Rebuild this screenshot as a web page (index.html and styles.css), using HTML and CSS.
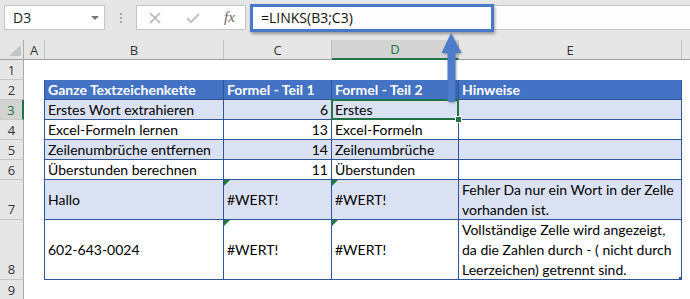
FILE: index.html
```html
<!DOCTYPE html>
<html lang="de">
<head>
  <meta charset="UTF-8">
  <title>LINKS</title>
  <link rel="stylesheet" href="styles.css">
</head>
<body>
  <div id="app">
    <div id="toolbar">
      <div id="namebox"><span>D3</span><span class="caret"></span></div>
      <div id="grip"><i></i><i></i><i></i></div>
      <div id="buttons">
        <svg width="12" height="12" viewBox="0 0 12 12"><path d="M1 1 L11 11 M11 1 L1 11" stroke="#b4b4b4" stroke-width="1.6" fill="none"/></svg>
        <svg width="14" height="12" viewBox="0 0 14 12"><path d="M1 6 L5 10 L13 2" stroke="#c2c2c2" stroke-width="2" fill="none"/></svg>
        <span class="fx">fx</span>
      </div>
      <div id="formula">=LINKS(B3;C3)</div>
    </div>

    <div id="sheet">
      <div class="corner"><span></span></div>
      <div class="ch">A</div>
      <div class="ch">B</div>
      <div class="ch">C</div>
      <div class="ch on">D</div>
      <div class="ch">E</div>
      <div class="ch rest"></div>

      <div class="rh">1</div>
      <div class="c"></div><div class="c"></div><div class="c"></div><div class="c"></div><div class="c"></div><div class="c"></div>

      <div class="rh">2</div>
      <div class="c edge"></div>
      <div class="t th">Ganze Textzeichenkette</div>
      <div class="t th">Formel - Teil 1</div>
      <div class="t th">Formel - Teil 2</div>
      <div class="t th">Hinweise</div>
      <div class="c"></div>

      <div class="rh on">3</div>
      <div class="c edge"></div>
      <div class="t band">Erstes Wort extrahieren</div>
      <div class="t band num">6</div>
      <div class="t band sel">Erstes</div>
      <div class="t band"></div>
      <div class="c"></div>

      <div class="rh">4</div>
      <div class="c edge"></div>
      <div class="t">Excel-Formeln lernen</div>
      <div class="t num">13</div>
      <div class="t">Excel-Formeln</div>
      <div class="t"></div>
      <div class="c"></div>

      <div class="rh">5</div>
      <div class="c edge"></div>
      <div class="t band">Zeilenumbrüche entfernen</div>
      <div class="t band num">14</div>
      <div class="t band">Zeilenumbrüche</div>
      <div class="t band"></div>
      <div class="c"></div>

      <div class="rh">6</div>
      <div class="c edge"></div>
      <div class="t">Überstunden berechnen</div>
      <div class="t num">11</div>
      <div class="t">Überstunden</div>
      <div class="t"></div>
      <div class="c"></div>

      <div class="rh low">7</div>
      <div class="c edge"></div>
      <div class="t band">Hallo</div>
      <div class="t band err">#WERT!</div>
      <div class="t band err">#WERT!</div>
      <div class="t band wrap">Fehler Da nur ein Wort in der Zelle<br>vorhanden ist.</div>
      <div class="c"></div>

      <div class="rh low">8</div>
      <div class="c edge"></div>
      <div class="t">602-643-0024</div>
      <div class="t err">#WERT!</div>
      <div class="t err">#WERT!</div>
      <div class="t wrap last">Vollständige Zelle wird angezeigt,<br>da die Zahlen durch - ( nicht durch<br>Leerzeichen) getrennt sind.</div>
      <div class="c"></div>

      <div class="rh">9</div>
      <div class="c"></div><div class="c"></div><div class="c"></div><div class="c"></div><div class="c"></div><div class="c"></div>
    </div>

    <!-- callout: box round the formula and arrow down to D3 -->
    <div id="callout"></div>
    <svg id="arrow" width="30" height="76" viewBox="0 0 30 76">
      <path d="M13 3 L23.5 23 L17.5 23 L17.5 70 Q17.5 72 15.5 72 L11.5 72 Q9.5 72 9.5 70 L9.5 23 L3.5 23 Z" fill="#4f7cca"/>
    </svg>
  </div>
</body>
</html>
```

FILE: styles.css
```css
body {
    margin: 0;
    background: #fff;
    font-family: 'Lato', 'Liberation Sans', sans-serif;
    color: #000;
}
#app {
    position: relative;
    width: 690px;
    height: 299px;
    overflow: hidden;
}

/* toolbar */
#toolbar {
    display: flex;
    align-items: flex-start;
    height: 40px;
    padding-top: 5px;
    box-sizing: border-box;
    background: #e6e6e6;
}
#namebox {
    display: flex;
    align-items: center;
    justify-content: space-between;
    box-sizing: border-box;
    width: 101px;
    height: 25px;
    margin-left: 4px;
    padding: 0 5px 0 8px;
    background: #fff;
    border: 1px solid #c6c6c6;
    font-family: 'Open Sans', sans-serif;
    font-size: 14px;
    color: #222;
}
.caret {
    width: 0;
    height: 0;
    border-left: 4px solid transparent;
    border-right: 4px solid transparent;
    border-top: 4px solid #777;
}
#grip {
    display: flex;
    flex-direction: column;
    align-items: center;
    gap: 2px;
    width: 31px;
    padding-top: 8px;
}
#grip i {
    width: 2px;
    height: 2px;
    background: #a8a8a8;
}
#buttons {
    display: flex;
    align-items: center;
    box-sizing: border-box;
    width: 110px;
    height: 25px;
    padding-left: 12px;
    background: #fff;
    border: 1px solid #c6c6c6;
}
#buttons svg:nth-child(2) {
    margin-left: 25px;
}
.fx {
    margin-left: 24px;
    font-family: 'Liberation Serif', serif;
    font-style: italic;
    font-size: 15px;
    color: #666;
}
#formula {
    flex: 1;
    box-sizing: border-box;
    height: 25px;
    margin-left: 4px;
    padding-left: 11px;
    line-height: 23px;
    background: #fdfdfd;
    border-top: 1px solid #c6c6c6;
    border-bottom: 1px solid #c6c6c6;
    font-family: 'Open Sans', sans-serif;
    font-size: 14px;
    color: #111;
}

/* sheet grid */
#sheet {
    display: grid;
    grid-template-columns: 24px 21px 179px 108px 127px 223px 1fr;
    grid-template-rows: 20px 20px 20px 20px 20px 20px 20px 40px 60px 20px;
}
#sheet > div {
    box-sizing: border-box;
}
.corner {
    position: relative;
    background: #e6e6e6;
    border-right: 1px solid #ababab;
    border-bottom: 1px solid #9f9f9f;
}
.corner span {
    position: absolute;
    right: 2px;
    bottom: 3px;
    width: 0;
    height: 0;
    border-left: 12px solid transparent;
    border-bottom: 11px solid #c4c4c4;
}
.ch {
    display: flex;
    align-items: center;
    justify-content: center;
    background: #e6e6e6;
    border-right: 1px solid #c0c0c0;
    border-bottom: 1px solid #9f9f9f;
    font-family: 'Open Sans', sans-serif;
    font-size: 13px;
    color: #333;
}
.ch.rest {
    border-right: 0;
}
.ch.on {
    background: #d3d3d3;
    color: #217346;
    border-bottom: 2px solid #217346;
}
.rh {
    display: flex;
    align-items: center;
    justify-content: center;
    background: #e6e6e6;
    border-right: 1px solid #ababab;
    border-bottom: 1px solid #c6c6c6;
    font-family: 'Open Sans', sans-serif;
    font-size: 13px;
    color: #333;
}
.rh.low {
    align-items: flex-end;
    padding-bottom: 1px;
}
.rh.on {
    background: #d3d3d3;
    color: #217346;
    border-right: 2px solid #217346;
}
.c {
    background: #fff;
}
.c.edge {
    border-right: 1px solid #2f5597;
}
.t {
    position: relative;
    display: flex;
    align-items: center;
    padding: 0 3px;
    background: #fff;
    border-right: 1px solid #2f5597;
    border-bottom: 1px solid #2f5597;
    font-size: 14px;
    white-space: nowrap;
}
.th {
    background: #4472c4;
    color: #fff;
    font-weight: bold;
}
.band {
    background: #d9e1f2;
}
.num {
    justify-content: flex-end;
}
.wrap {
    line-height: 20px;
}
.err::before {
    content: "";
    position: absolute;
    top: 0;
    left: 0;
    border-top: 6px solid #1f7a3f;
    border-right: 6px solid transparent;
}
.sel::after {
    content: "";
    position: absolute;
    top: -1px;
    left: -1px;
    right: -1px;
    bottom: -1px;
    border: 2px solid #217346;
}
.sel::before {
    content: "";
    position: absolute;
    right: -4px;
    bottom: -4px;
    width: 5px;
    height: 5px;
    background: #217346;
    border: 1px solid #fff;
    z-index: 2;
}
.last::after {
    content: "";
    position: absolute;
    right: -1px;
    bottom: -1px;
    width: 3px;
    height: 3px;
    background: #2f5597;
}

/* callout overlay */
#callout {
    position: absolute;
    left: 250px;
    top: 4px;
    width: 244px;
    height: 28px;
    box-sizing: border-box;
    border: 3px solid #4a78c8;
    box-shadow: 1px 2px 3px rgba(0, 0, 0, 0.35);
}
#arrow {
    position: absolute;
    left: 438px;
    top: 30px;
    filter: drop-shadow(1px 1px 1px rgba(0, 0, 0, 0.3));
}
```
